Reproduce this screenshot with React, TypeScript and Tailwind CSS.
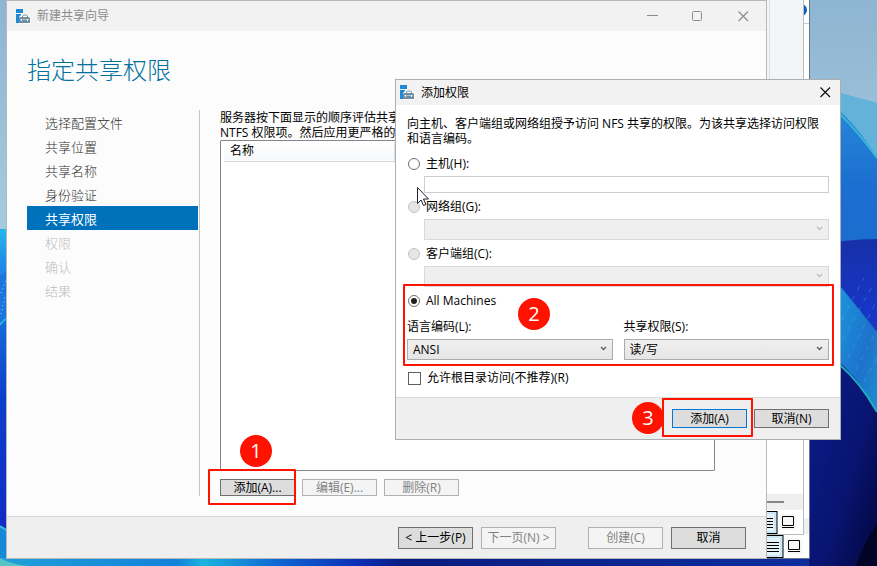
import { useState } from "react";
import type { ReactNode, SelectHTMLAttributes, ButtonHTMLAttributes } from "react";
import clsx from "clsx";

const steps = [
  { name: "选择配置文件", state: "done" },
  { name: "共享位置", state: "done" },
  { name: "共享名称", state: "done" },
  { name: "身份验证", state: "done" },
  { name: "共享权限", state: "current" },
  { name: "权限", state: "disabled" },
  { name: "确认", state: "disabled" },
  { name: "结果", state: "disabled" },
];

const Wallpaper = () => (
  <svg
    className="absolute inset-0 h-full w-full"
    viewBox="0 0 877 566"
    preserveAspectRatio="none"
    aria-hidden="true"
  >
    <defs>
      <linearGradient id="sky" x1="0" y1="0" x2="0" y2="1">
        <stop offset="0" stopColor="#8eb5d1" />
        <stop offset="0.4" stopColor="#a5cae0" />
      </linearGradient>
      <linearGradient id="petalLeft" x1="0" y1="0" x2="0" y2="1">
        <stop offset="0" stopColor="#25b8ea" />
        <stop offset="0.1" stopColor="#1e8ce8" />
        <stop offset="0.5" stopColor="#0b3fcb" />
        <stop offset="1" stopColor="#1526c4" />
      </linearGradient>
      <linearGradient id="petalRight" x1="0" y1="0" x2="0" y2="1">
        <stop offset="0" stopColor="#2a8edb" />
        <stop offset="0.2" stopColor="#1b6fd0" />
        <stop offset="1" stopColor="#1a62c2" />
      </linearGradient>
      <linearGradient id="inner" x1="0" y1="0" x2="0" y2="1">
        <stop offset="0" stopColor="#1730a8" />
        <stop offset="0.2" stopColor="#1735c4" />
        <stop offset="1" stopColor="#1a47c8" />
      </linearGradient>
      <linearGradient id="teal" x1="0" y1="0" x2="1" y2="1">
        <stop offset="0" stopColor="#1a96dc" />
        <stop offset="0.6" stopColor="#1d72cb" />
        <stop offset="1" stopColor="#1f8fcf" />
      </linearGradient>
      <linearGradient id="deep" x1="0" y1="0" x2="1" y2="1">
        <stop offset="0" stopColor="#0d1c8e" />
        <stop offset="0.6" stopColor="#081470" />
        <stop offset="1" stopColor="#03063c" />
      </linearGradient>
      <linearGradient id="bottom" x1="0" y1="0" x2="1" y2="0">
        <stop offset="0" stopColor="#1fa0d8" />
        <stop offset="0.22" stopColor="#1481da" />
        <stop offset="0.25" stopColor="#1ab5df" />
        <stop offset="0.34" stopColor="#1169d3" />
        <stop offset="0.44" stopColor="#0b2fb7" />
        <stop offset="0.5" stopColor="#081c80" />
        <stop offset="1" stopColor="#0e2d9e" />
      </linearGradient>
    </defs>
    <rect width="877" height="566" fill="url(#sky)" />
    <rect y="229" width="60" height="337" fill="url(#petalLeft)" />
    <path d="M0 276Q4 272 8 272V318Q3 320 0 325Z" fill="#1a75dc" />
    <path d="M0 325Q3 320 8 318" stroke="#25b5df" strokeWidth="2" fill="none" />
    <path d="M1 293L6 280M1 314L5 297" stroke="#a5d5f3" strokeDasharray="1 3" />
    <path d="M0 526Q5 529 8 531V566H0Z" fill="#1787d8" />
    <path d="M0 526Q5 529 8 531" stroke="#39bdd9" strokeWidth="2" />

    <path d="M809 80L840 93L877 103V566H809Z" fill="#5caed8" />
    <path d="M840 93L877 103V160Q858 132 840 113Z" fill="#62b2da" />
    <path d="M809 88Q848 110 877 158V566H809Z" fill="url(#petalRight)" />
    <path d="M840 114Q860 134 877 158" stroke="#38b5d8" strokeWidth="2" fill="none" />
    <path d="M809 247Q845 239 877 239V566H809Z" fill="url(#inner)" />
    <path d="M840 286Q859 309 877 332V413Q861 384 840 365Z" fill="url(#teal)" />
    <path
      d="M842 320L864 278M842 340L873 285M848 358L876 302M856 370L877 330M864 382L877 358"
      stroke="#64b6e6"
      strokeDasharray="5 6"
      opacity="0.35"
    />
    <path d="M809 345Q848 357 877 412V566H809Z" fill="url(#deep)" />
    <path d="M840 365Q860 382 877 412" stroke="#1eafc3" strokeWidth="2" fill="none" />
    <path d="M877 524Q864 542 856 566H877Z" fill="#020326" />

    <rect y="558" width="809" height="8" fill="url(#bottom)" />
    <path d="M0 558Q10 564 28 566H0Z" fill="#56c3c7" />
  </svg>
);

const ServerIcon = () => (
  <svg width="15" height="15" viewBox="0 0 15 15" aria-hidden="true">
    <path d="M0 0H7V4H0ZM0 5H5V14H0Z" fill="#1e8ad6" />
    <path d="M3 8L6 5H11L15 8V15H3Z" fill="#fff" />
    <path d="M6.5 8V7L7.5 6H10.5L11.5 7V8" stroke="#6f8ea3" fill="none" />
    <path d="M4 8H13L14 9V14H3V9Z" fill="#6f8ea3" />
    <path d="M4 10.5H13" stroke="#a9bcc8" />
    <path d="M5.5 10V12M11.5 10V12" stroke="#eef3f6" />
  </svg>
);

const DocIcon = () => (
  <svg width="19" height="23" viewBox="0 0 19 23" aria-hidden="true">
    <rect x="-1" y="0.5" width="19" height="22" fill="#cce8f6" stroke="#000" />
    <rect x="1" y="3" width="14" height="17" fill="#e5f2f8" />
    <path d="M2 7.5H14M2 10.5H14M2 13.5H14M2 16.5H14" stroke="#000" />
  </svg>
);

const MonitorIcon = () => (
  <svg width="16" height="16" viewBox="0 0 16 16" aria-hidden="true">
    <rect width="16" height="16" fill="#f7f7f7" />
    <path d="M2.5 2.5H13.5V11.5H2.5ZM2 13.5H14" stroke="#000" fill="none" />
  </svg>
);

const BackgroundWindows = () => (
  <>
    <div className="absolute top-0 right-[67px] bottom-[7px] left-[19px] flex flex-col justify-end border-r border-b border-[#65768c] bg-white">
      <div className="absolute top-0 right-0 h-6 w-6 overflow-hidden border-b border-[#c8cdd2]">
        <span className="absolute top-1 right-[2px] h-3 w-3 rounded-full bg-[#0b62b8]" />
      </div>
      <div className="h-4 bg-[#efefef]" />
      <div className="flex h-6 items-center justify-end gap-[2px] pr-[7px]">
        <DocIcon />
        <MonitorIcon />
      </div>
    </div>
    <div className="absolute top-0 right-[73px] bottom-[31px] left-[19px] flex flex-col border-r border-b border-[#b9bcbf] bg-white">
      <div className="h-[90px] bg-[#f4f5f7]">
        <div className="ml-auto h-full w-[34px] border-l border-[#dcdee1]" />
      </div>
      <div className="flex-1" />
      <div className="flex h-4 items-center justify-end bg-[#efefef] pr-[19px]">
        <span className="h-[2px] w-10 bg-[#868686]" />
      </div>
      <div className="flex h-6 items-center justify-end gap-[2px] pr-[7px]">
        <DocIcon />
        <MonitorIcon />
      </div>
    </div>
  </>
);

interface PushButtonProps extends ButtonHTMLAttributes<HTMLButtonElement> {
  primary?: boolean;
}

const PushButton = ({ className, primary, ...props }: PushButtonProps) => (
  <button
    type="button"
    className={clsx(
      "flex w-[75px] items-center justify-center border bg-[#dddddd] whitespace-nowrap disabled:border-[#adb2b5] disabled:bg-[#f4f4f4] disabled:text-[#838383]",
      primary ? "border-[#0078d7]" : "border-[#707070]",
      className,
    )}
    {...props}
  />
);

const Combo = ({ className, children, ...props }: SelectHTMLAttributes<HTMLSelectElement>) => (
  <div className={clsx("relative", className)}>
    <select
      className="block h-[21px] w-full appearance-none border border-[#acacac] bg-linear-to-b from-[#f0f0f0] to-[#e5e5e5] px-[5px] text-black opacity-100 disabled:border-[#d9d9d9] disabled:from-[#efefef] disabled:to-[#efefef]"
      {...props}
    >
      {children}
    </select>
    <svg
      className={clsx(
        "pointer-events-none absolute top-[7px] right-[6px]",
        props.disabled ? "text-[#bfbfbf]" : "text-[#606060]",
      )}
      width="7"
      height="6"
      viewBox="0 0 7 6"
      aria-hidden="true"
    >
      <path d="M1 1L3.5 3.5L6 1" stroke="currentColor" strokeWidth="1.4" fill="none" />
    </svg>
  </div>
);

interface TargetRadioProps {
  value: string;
  label: string;
  target: string;
  disabled?: boolean;
  onSelect: (value: string) => void;
}

const TargetRadio = ({ value, label, target, disabled, onSelect }: TargetRadioProps) => (
  <label className="flex h-4 items-center gap-[6px]">
    <span className="relative flex h-3 w-3 items-center justify-center">
      <input
        type="radio"
        name="target"
        value={value}
        checked={target === value}
        disabled={disabled}
        onChange={() => onSelect(value)}
        className="peer h-3 w-3 appearance-none rounded-full border border-[#707070] bg-white disabled:border-[#c4c4c4] disabled:bg-[#e6e6e6]"
      />
      <span className="pointer-events-none absolute top-[3px] left-[3px] hidden h-[6px] w-[6px] rounded-full bg-[#212121] peer-checked:block" />
    </span>
    {label}
  </label>
);

const Marker = ({ className, children }: { className: string; children: ReactNode }) => (
  <span
    className={clsx(
      "pointer-events-none absolute flex h-8 w-8 items-center justify-center rounded-full bg-[#ff1200] text-xl text-white",
      className,
    )}
  >
    {children}
  </span>
);

const Outline = ({ className }: { className: string }) => (
  <span className={clsx("pointer-events-none absolute rounded-[1px] border-2 border-[#ff1200]", className)} />
);

const ShareWizard = () => (
  <section className="absolute top-0 right-[110px] bottom-[7px] left-[6px] flex flex-col border border-[#b5b9bc] bg-[#fcfcfc]">
    <header className="flex h-[30px] shrink-0 items-center bg-[#f2f2f2] pl-[9px] text-[#8c8c8c]">
      <ServerIcon />
      <h2 className="flex-1 pl-[6px]">新建共享向导</h2>
      <button type="button" aria-label="最小化" className="flex w-[46px] justify-center">
        <svg width="11" height="11" viewBox="0 0 11 11"><path d="M0 4.5H11" stroke="currentColor" /></svg>
      </button>
      <button type="button" aria-label="最大化" className="flex w-[45px] justify-center">
        <svg width="11" height="11" viewBox="0 0 11 11"><rect x="0.5" y="0.5" width="9" height="9" rx="1" stroke="currentColor" fill="none" /></svg>
      </button>
      <button type="button" aria-label="关闭" className="flex w-[46px] justify-center">
        <svg width="11" height="11" viewBox="0 0 11 11"><path d="M0.5 0.5L10 10M10 0.5L0.5 10" stroke="currentColor" strokeWidth="1.2" /></svg>
      </button>
    </header>

    <div className="flex min-h-0 flex-1 flex-col pr-5 pl-5">
      <h1 className="pt-[21px] text-2xl leading-9 font-light text-[#00709f]">指定共享权限</h1>
      <div className="mt-[22px] mb-5 flex min-h-0 flex-1">
        <ol className="w-[173px] shrink-0 border-r border-[#c4c4c4] pr-px text-[13px] leading-6">
          {steps.map((step) => (
            <li
              key={step.name}
              className={clsx(
                "h-6 pt-px pl-[18px]",
                step.state === "current" && "bg-[#0072bc] text-white",
                step.state === "done" && "font-light text-[#303030]",
                step.state === "disabled" && "font-light text-[#bcbcbc]",
              )}
            >
              {step.name}
            </li>
          ))}
        </ol>
        <div className="flex flex-1 flex-col pl-5">
          <p className="max-w-48 leading-[15px]">
            服务器按下面显示的顺序评估共享 NTFS 权限项。然后应用更严格的
          </p>
          <div className="mr-[31px] flex-1 rounded-[1px] border border-[#828790] bg-white pt-px pl-[3px]">
            <table className="w-full">
              <thead>
                <tr className="h-[19px] border-b border-[#d5d5d5] bg-linear-to-b from-white to-[#f7f8fa]">
                  <th className="w-[170px] border-r border-[#dedfe1] pl-[6px] text-left font-normal">名称</th>
                  <th />
                </tr>
              </thead>
            </table>
          </div>
          <div className="relative flex gap-[7px] pt-2">
            <PushButton className="h-[17px]">添加(A)...</PushButton>
            <PushButton className="h-[17px]" disabled>编辑(E)...</PushButton>
            <PushButton className="h-[17px]" disabled>删除(R)</PushButton>
            <Outline className="-top-[2px] -left-3 h-9 w-[88px]" />
            <Marker className="-top-9 left-5">1</Marker>
          </div>
        </div>
      </div>
    </div>

    <footer className="flex h-[42px] shrink-0 items-center justify-end gap-2 border-t border-[#d9d9d9] bg-[#efefef] pr-5">
      <PushButton className="h-[22px]">&lt; 上一步(P)</PushButton>
      <PushButton className="h-[22px]" disabled>下一页(N) &gt;</PushButton>
      <PushButton className="ml-6 h-[22px]" disabled>创建(C)</PushButton>
      <PushButton className="h-[22px]">取消</PushButton>
    </footer>
  </section>
);

const AddPermissionDialog = () => {
  const [target, setTarget] = useState("all");
  const [host, setHost] = useState("");
  const [allowRoot, setAllowRoot] = useState(false);

  return (
    <section
      role="dialog"
      aria-labelledby="dialog-title"
      className="absolute top-[79px] left-[395px] w-[446px] border border-[#aaafb3] bg-white"
    >
      <header className="flex h-[25px] items-center bg-[#f2f2f2] pl-1">
        <ServerIcon />
        <h2 id="dialog-title" className="flex-1 pl-[6px]">添加权限</h2>
        <button type="button" aria-label="关闭" className="px-[9px]">
          <svg width="11" height="11" viewBox="0 0 11 11"><path d="M0.5 0.5L10 10M10 0.5L0.5 10" stroke="#111" strokeWidth="1.2" /></svg>
        </button>
      </header>

      <div className="px-[11px] pt-[11px]">
        <p className="leading-[15px]">
          向主机、客户端组或网络组授予访问 NFS 共享的权限。为该共享选择访问权限和语言编码。
        </p>
        <div className="pt-[10px] pl-px">
          <TargetRadio value="host" label="主机(H):" target={target} onSelect={setTarget} />
          <input
            type="text"
            aria-label="主机"
            value={host}
            onChange={(e) => setHost(e.target.value)}
            className="mt-1 ml-4 block h-[17px] w-[calc(100%-16px)] border border-[#cdcdd2] bg-white px-1"
          />
          <div className="pt-[6px]">
            <TargetRadio value="netgroup" label="网络组(G):" target={target} disabled onSelect={setTarget} />
          </div>
          <Combo className="mt-1 ml-4" aria-label="网络组" disabled />
          <div className="pt-[6px]">
            <TargetRadio value="client" label="客户端组(C):" target={target} disabled onSelect={setTarget} />
          </div>
          <Combo className="mt-1 ml-4" aria-label="客户端组" disabled />
        </div>

        <div className="relative pt-[6px]">
          <div className="pl-px">
            <TargetRadio value="all" label="All Machines" target={target} onSelect={setTarget} />
          </div>
          <div className="flex gap-[11px] pt-[10px]">
            <div className="flex-1">
              <label htmlFor="encoding" className="block h-5 leading-4">语言编码(L):</label>
              <Combo id="encoding">
                <option>ANSI</option>
              </Combo>
            </div>
            <div className="flex-1">
              <label htmlFor="permission" className="block h-5 leading-4">共享权限(S):</label>
              <Combo id="permission">
                <option>读/写</option>
              </Combo>
            </div>
          </div>
          <Outline className="-top-[3px] -right-[5px] -bottom-[6px] -left-1" />
          <Marker className="top-[11px] left-[111px]">2</Marker>
        </div>

        <label className="mt-[10px] mb-[11px] flex h-4 items-center gap-[6px] pl-px">
          <input
            type="checkbox"
            checked={allowRoot}
            onChange={(e) => setAllowRoot(e.target.checked)}
            className="h-[13px] w-[13px] appearance-none border border-[#606060] bg-white checked:bg-[#606060]"
          />
          允许根目录访问(不推荐)(R)
        </label>
      </div>

      <footer className="relative flex h-[42px] items-center justify-end gap-[7px] border-t border-[#d9d9d9] bg-[#efefef] pr-[11px]">
        <PushButton className="h-[19px]" primary>添加(A)</PushButton>
        <PushButton className="h-[19px]">取消(N)</PushButton>
        <Outline className="top-0 right-[87px] h-[39px] w-[91px]" />
        <Marker className="top-1 right-[176px]">3</Marker>
      </footer>
    </section>
  );
};

const Cursor = () => (
  <svg
    className="pointer-events-none absolute top-[186px] left-[416px]"
    width="14"
    height="21"
    viewBox="0 0 14 21"
    aria-hidden="true"
  >
    <path d="M1.5 1.5V17.5L5 14L7.5 19.5L10 18.5L7.5 13H12.5Z" fill="#fff" stroke="#1c2230" />
  </svg>
);

export default function App() {
  return (
    <main className="relative h-screen min-h-[520px] overflow-hidden font-['Open_Sans','Noto_Sans_CJK_SC',sans-serif] text-xs text-black">
      <Wallpaper />
      <BackgroundWindows />
      <ShareWizard />
      <AddPermissionDialog />
      <Cursor />
    </main>
  );
}
